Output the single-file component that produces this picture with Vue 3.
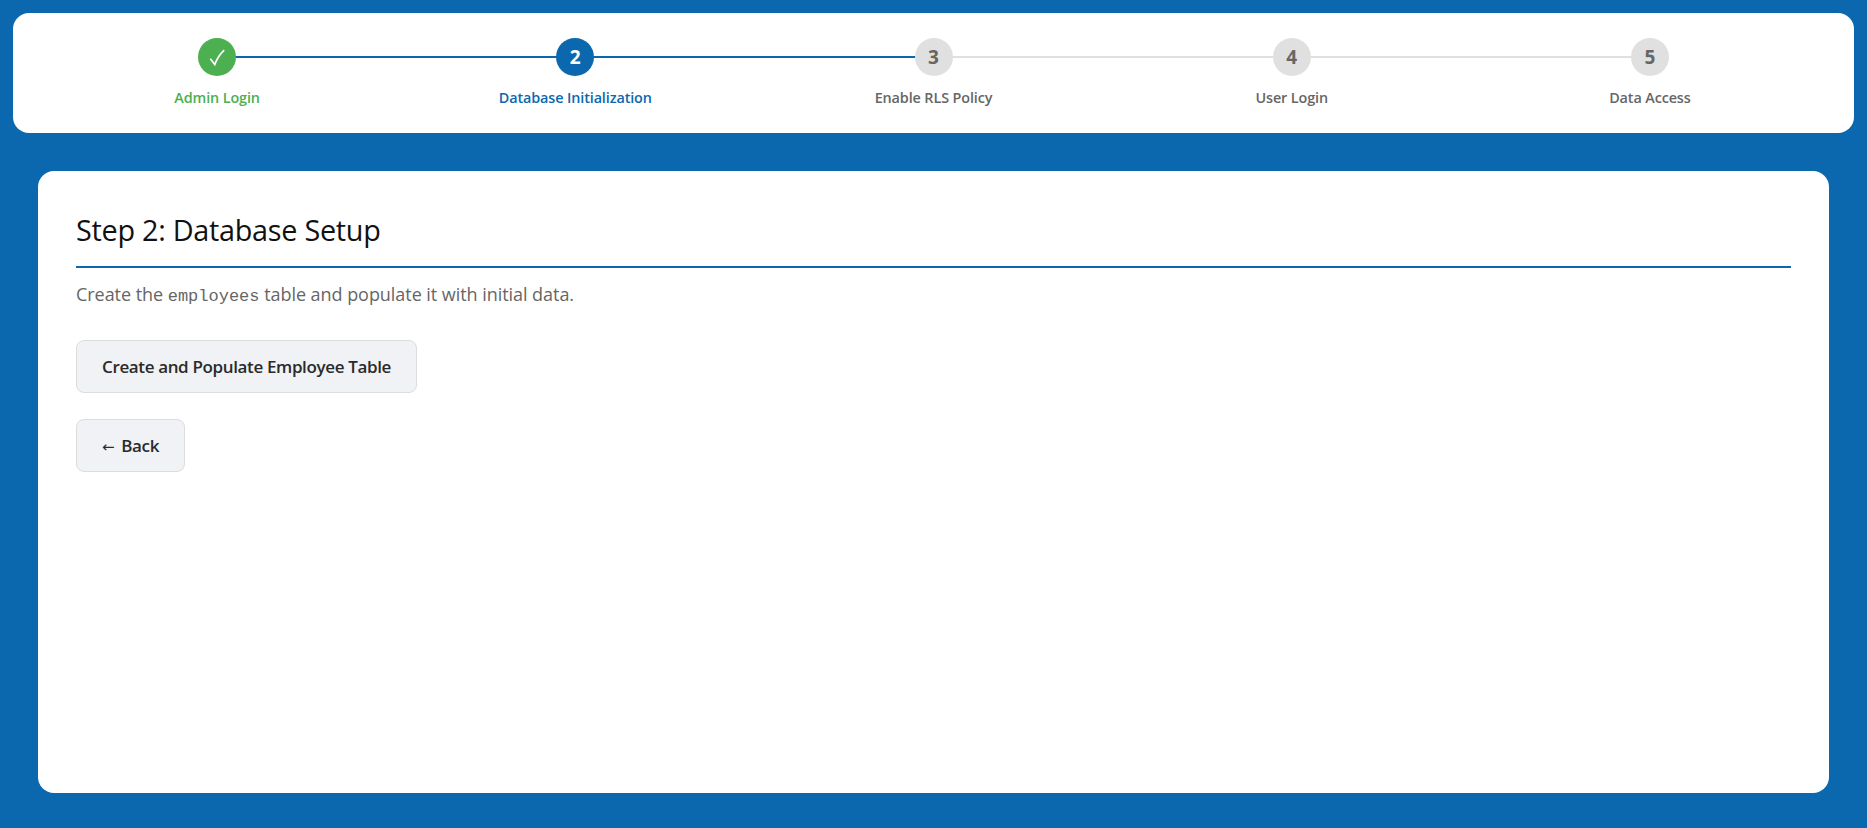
<script setup>
const steps = [
  { n: '', label: 'Admin Login', state: 'done' },
  { n: '2', label: 'Database Initialization', state: 'active' },
  { n: '3', label: 'Enable RLS Policy', state: '' },
  { n: '4', label: 'User Login', state: '' },
  { n: '5', label: 'Data Access', state: '' },
]
</script>

<template>
  <div class="page">
    <nav class="stepper">
      <div v-for="(s, i) in steps" :key="s.label" class="step" :class="s.state">
        <span v-if="i < steps.length - 1" class="line" :class="{ on: i < 2 }"></span>
        <div class="dot">
          <svg v-if="s.state === 'done'" class="check" viewBox="0 0 38 38" width="38" height="38">
            <path d="M12.3 20.8 L16.8 26.5 Q20 18 26.2 12.2" fill="none" stroke="#fff" stroke-width="1.7" />
          </svg>
          <template v-else>{{ s.n }}</template>
        </div>
        <div class="label">{{ s.label }}</div>
      </div>
    </nav>
    <main class="card">
      <h2>Step 2: Database Setup</h2>
      <p>Create the <code>employees</code> table and populate it with initial data.</p>
      <button class="primary">Create and Populate Employee Table</button>
      <button class="back"><span class="arrow">←</span> Back</button>
    </main>
  </div>
</template>

<style>
html, body { margin: 0; background: #0b68ae; }
</style>

<style scoped>
.page {
  height: 828px;
  box-sizing: border-box;
  padding: 13px 13px 35px;
  display: flex;
  flex-direction: column;
  gap: 38px;
  background: #0b68ae;
  font-family: "Open Sans", "Noto Sans", sans-serif;
}
.stepper {
  height: 120px;
  box-sizing: border-box;
  background: #fff;
  border-radius: 16px;
  padding: 25px 25px 0;
  display: flex;
}
.step {
  flex: 1;
  position: relative;
  display: flex;
  flex-direction: column;
  align-items: center;
}
.line {
  position: absolute;
  top: 18px;
  left: 50%;
  width: 100%;
  height: 2px;
  background: #e0e0e0;
}
.line.on { background: #0b68ae; }
.dot {
  position: relative;
  width: 38px;
  height: 38px;
  border-radius: 50%;
  background: #e0e0e0;
  color: #666;
  font-size: 19px;
  font-weight: 700;
  line-height: 38px;
  text-align: center;
}
.check { display: block; }
.done .dot { background: #4caf50; }
.active .dot { background: #0b68ae; color: #fff; }
.label {
  margin-top: 12px;
  font-size: 14.4px;
  font-weight: 600;
  line-height: 20px;
  letter-spacing: -0.12px;
  color: #666;
}
.done .label { color: #4caf50; }
.active .label { color: #0b68ae; }
.card {
  flex: 1;
  margin: 0 25px;
  background: #fff;
  border-radius: 16px;
  padding: 38px;
  display: flex;
  flex-direction: column;
  align-items: flex-start;
}
h2 {
  align-self: stretch;
  margin: 0;
  height: 59px;
  box-sizing: border-box;
  border-bottom: 2px solid #0b68ae;
  font-size: 28.8px;
  font-weight: 400;
  line-height: 42px;
  letter-spacing: -0.27px;
  color: #111;
}
p {
  margin: 13px 0 0;
  font-size: 18px;
  line-height: 26px;
  letter-spacing: -0.05px;
  color: #666;
}
code {
  font-family: "Liberation Mono", monospace;
  font-size: 17px;
  line-height: 1;
  letter-spacing: 0;
}
button {
  box-sizing: border-box;
  height: 53px;
  padding: 0 25px;
  background: #f0f2f5;
  border: 1px solid #ddd;
  border-radius: 8px;
  font-family: inherit;
  font-size: 17px;
  font-weight: 600;
  letter-spacing: -0.36px;
  color: #2a2a2a;
}
.arrow {
  margin-right: 3px;
  font-family: "DejaVu Sans", sans-serif;
  font-size: 15px;
  font-weight: 400;
}
.primary { margin-top: 33px; }
.back { margin-top: 26px; }
</style>
